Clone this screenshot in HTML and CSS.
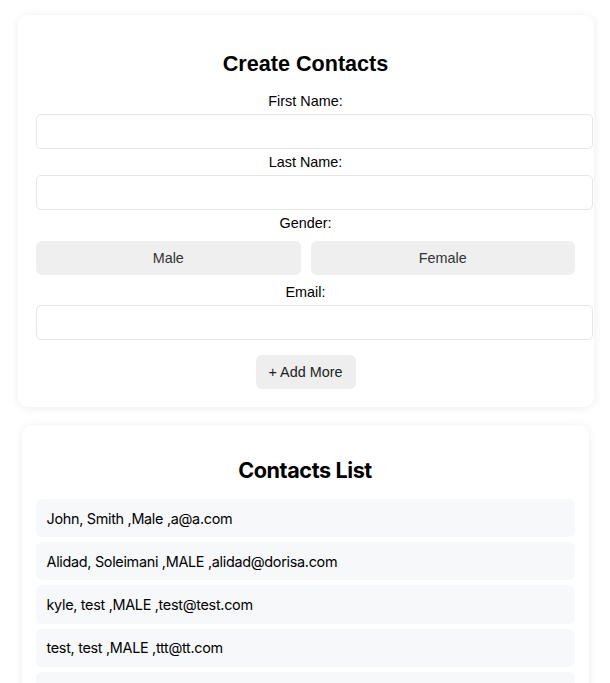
FILE: index.html
```
<!DOCTYPE html>
<html>
<head>
<meta charset="utf-8">
<link rel="stylesheet" href="styles.css">
</head>
<body>
<div class="page">
  <section class="card form-card">
    <h2 class="form-title">Create Contacts</h2>
    <form class="form">
      <label class="label label-first">First Name:</label>
      <input class="input" type="text">
      <label class="label">Last Name:</label>
      <input class="input" type="text">
      <label class="label">Gender:</label>
      <div class="gender">
        <button type="button" class="gender-btn">Male</button>
        <button type="button" class="gender-btn">Female</button>
      </div>
      <label class="label label-email">Email:</label>
      <input class="input" type="text">
      <button type="button" class="add-btn">+ Add More</button>
    </form>
  </section>
  <section class="card list-card">
    <h2 class="list-title">Contacts List</h2>
    <ul class="list">
      <li class="item">John, Smith ,Male ,a@a.com</li>
      <li class="item">Alidad, Soleimani ,MALE ,alidad@dorisa.com</li>
      <li class="item">kyle, test ,MALE ,test@test.com</li>
      <li class="item">test, test ,MALE ,ttt@tt.com</li>
      <li class="item">test, test ,MALE ,ttt@tt.com</li>
    </ul>
  </section>
</div>
</body>
</html>
```
FILE: styles.css
```
html, body {
  margin: 0;
  padding: 0;
  background: #ffffff;
}
.page {
  padding-top: 15px;
  padding-left: 2px;
  display: flex;
  flex-direction: column;
  align-items: center;
  gap: 18px;
}
.card {
  background: #ffffff;
  border-radius: 10px;
  box-shadow: 0 1px 10px rgba(0, 0, 0, 0.08);
  box-sizing: border-box;
}
.form-card {
  width: 576px;
  padding: 18px 19px 18px 18px;
  font-family: "Liberation Sans", Arial, sans-serif;
  color: #000;
}
.form-title {
  margin: 18px 0 17px;
  font-size: 21.6px;
  line-height: 25px;
  font-weight: 700;
  text-align: center;
}
.form {
  display: flex;
  flex-direction: column;
  align-items: stretch;
}
.label {
  display: block;
  text-align: center;
  font-size: 14.4px;
  line-height: 16px;
  margin: 5px 0;
}
.label-first {
  margin-top: 0;
}
.label-email {
  margin-top: 9px;
}
.input {
  display: block;
  width: 100%;
  box-sizing: content-box;
  height: 33px;
  padding: 0 8px;
  margin: 0;
  border: 1px solid #e6e6e6;
  border-radius: 5px;
  background: #fff;
  font: inherit;
  outline: none;
}
.gender {
  display: flex;
  gap: 10px;
  margin-top: 5px;
}
.gender-btn {
  flex: 1;
  height: 34px;
  border: none;
  border-radius: 6px;
  background: #efefef;
  color: #333;
  font-family: "Liberation Sans", Arial, sans-serif;
  font-size: 14.4px;
  padding: 0;
}
.add-btn {
  align-self: center;
  margin-top: 15px;
  height: 34px;
  width: 100px;
  border: none;
  border-radius: 6px;
  background: #eeeeee;
  color: #222;
  font-family: "Liberation Sans", Arial, sans-serif;
  font-size: 14.4px;
  padding: 0;
}
.list-card {
  width: 567px;
  margin-right: 2px;
  padding: 14px;
  font-family: Inter, "Noto Sans", sans-serif;
  color: #000;
}
.list-title {
  margin: 18px 0 16px;
  font-size: 21.6px;
  line-height: 26px;
  font-weight: 700;
  letter-spacing: -0.4px;
  text-align: center;
}
.list {
  list-style: none;
  margin: 0;
  padding: 0;
  display: flex;
  flex-direction: column;
  gap: 5px;
}
.item {
  background: #f7f8fa;
  border-radius: 6px;
  padding: 10.6px 11px 9.6px;
  font-size: 14.4px;
  line-height: 18px;
  letter-spacing: -0.3px;
}
```
